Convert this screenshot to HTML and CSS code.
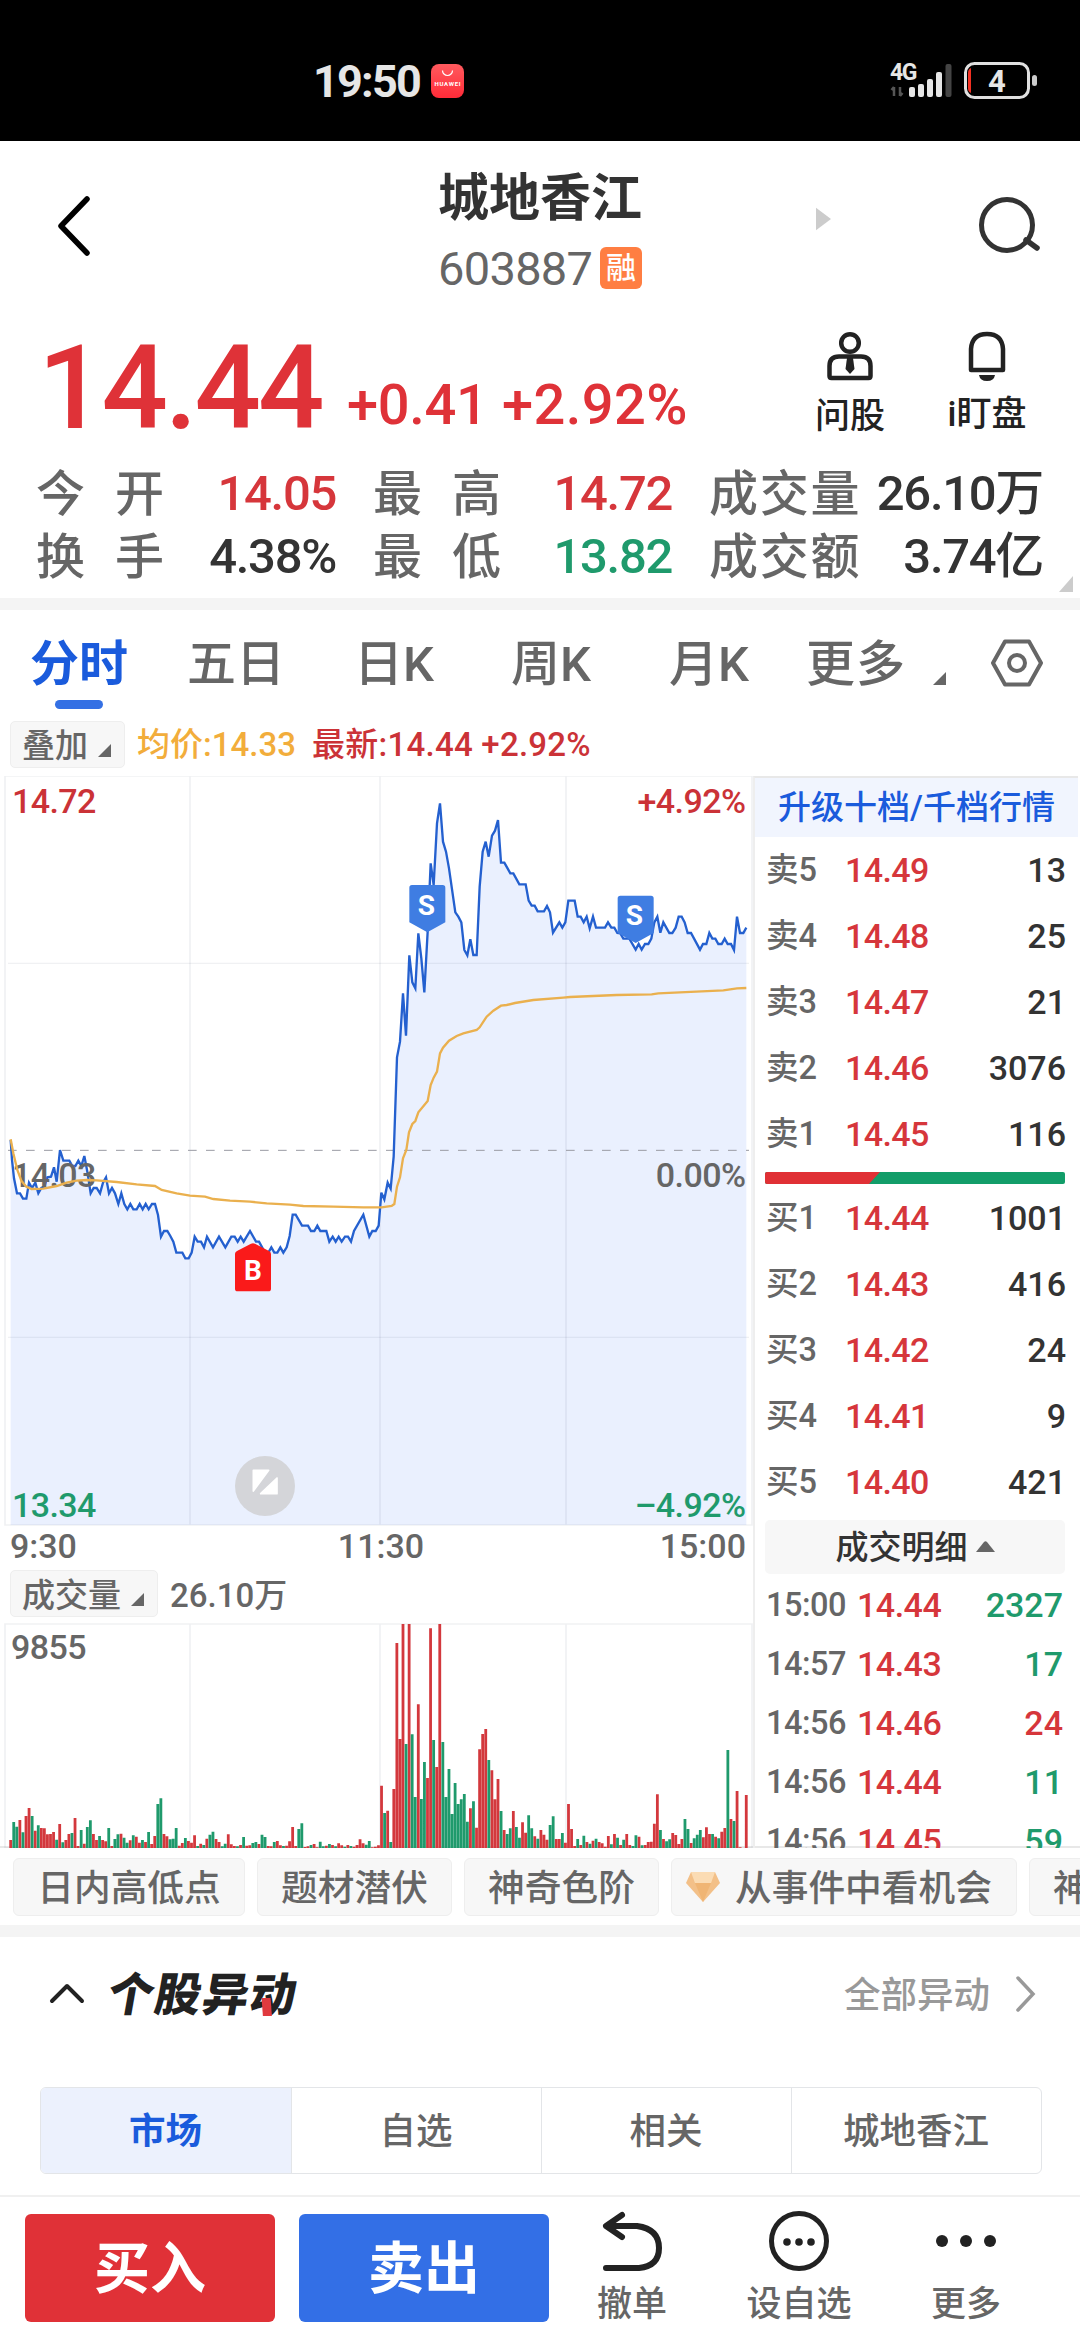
FILE: index.html
```html
<!DOCTYPE html>
<html lang="zh-CN">
<head>
<meta charset="utf-8">
<title>城地香江 603887</title>
<link rel="stylesheet" href="styles.css">
</head>
<body>
<div class="status">
  <div class="clock">19:50</div>
  <svg class="app-icon" viewBox="0 0 33 34"><defs><linearGradient id="hw" x1="0" y1="0" x2="0" y2="1"><stop offset="0" stop-color="#ff5a5e"/><stop offset="1" stop-color="#ff2b38"/></linearGradient></defs><rect width="33" height="34" rx="8" fill="url(#hw)"/><path d="M11.500 6.500a5 5 0 0 0 10 0" fill="none" stroke="#fff" stroke-width="1.200"/><text x="3.500" y="22" font-size="6" font-weight="700" fill="#fff" textLength="26">HUAWEI</text></svg>
  <div class="network">
    <span class="net-type">4G</span>
    <svg class="signal" viewBox="0 0 64 36"><path d="M4 25v9M1.500 28L4 25M10 25v9M12.500 31L10 34" stroke="#555" stroke-width="2.500" fill="none"/><g fill="#e6e6e6"><rect x="19" y="25" width="6" height="10" rx="2"/><rect x="28" y="22" width="6" height="13" rx="2"/><rect x="37" y="17" width="6" height="18" rx="2"/><rect x="46" y="10" width="6" height="25" rx="2"/></g><rect x="55.500" y="2" width="6" height="33" rx="2" fill="#444"/></svg>
  </div>
  <svg class="battery" viewBox="0 0 74 37"><rect x="1.500" y="1.500" width="63" height="34" rx="9" fill="none" stroke="#e0e0e0" stroke-width="3"/><path d="M7 6v25q-3-1-3-5V11q0-4 3-5z" fill="#f33122"/><rect x="68" y="13" width="5" height="11" rx="2.500" fill="#ccc"/><text x="33" y="30" text-anchor="middle" font-size="31" font-weight="700" fill="#e6e6e6">4</text></svg>
</div>

<header class="header">
  <svg class="back" viewBox="0 0 36 64"><path d="M32 5L6 32l26 27" fill="none" stroke="#000" stroke-width="5.500" stroke-linecap="round" stroke-linejoin="round"/></svg>
  <div class="title">
    <h1>城地香江</h1>
    <div class="code"><span>603887</span><b>融</b></div>
  </div>
  <svg class="next" viewBox="0 0 16 24"><path d="M0 0L16 12 0 24z" fill="#ccc"/></svg>
  <svg class="search" viewBox="0 0 64 60"><circle cx="29" cy="29" r="25.500" fill="none" stroke="#333" stroke-width="5"/><path d="M48 44l11 8" stroke="#333" stroke-width="5.500" stroke-linecap="round"/></svg>
</header>

<section class="quote">
  <div class="price-row">
    <div class="price">14.44</div>
    <div class="change">+0.41</div>
    <div class="change pct">+2.92%</div>
    <div class="quick ask"><svg viewBox="0 0 48 50"><g fill="none" stroke="#222" stroke-width="4.500"><circle cx="24" cy="12" r="8.800"/><path d="M3.500 45V35q0-9.500 9.500-9.500h22q9.500 0 9.500 9.500v10q0 2-2 2h-37q-2 0-2-2z"/></g><path d="M21 27h6l1.500 11-4.500 5-4.500-5z" fill="#222"/></svg><span>问股</span></div>
    <div class="quick watch"><svg viewBox="0 0 48 50"><path d="M8 39V18Q9 3 24 3t16 15v21z" fill="none" stroke="#222" stroke-width="4.500" stroke-linejoin="round"/><path d="M16 44h16q-1 6-8 6t-8-6z" fill="#222"/></svg><span>i盯盘</span></div>
  </div>
  <div class="stats">
    <span class="wide">今<i></i>开</span><span class="num up">14.05</span><span class="wide">最<i></i>高</span><span class="num up">14.72</span><span>成交量</span><span class="num">26.10万</span>
    <span class="wide">换<i></i>手</span><span class="num">4.38%</span><span class="wide">最<i></i>低</span><span class="num down">13.82</span><span>成交额</span><span class="num">3.74亿</span>
  </div>
  <svg class="expand" viewBox="0 0 14 16"><path d="M14 0v16H0z" fill="#ccc"/></svg>
</section>
<div class="band"></div>

<nav class="tabs">
  <span class="active">分时</span><span>五日</span><span>日K</span><span>周K</span><span>月K</span><span>更多</span>
  <svg class="tab-corner" viewBox="0 0 13 13"><path d="M13 0v13H0z" fill="#666"/></svg>
  <svg class="settings" viewBox="0 0 52 48"><path d="M14 2.500h24L50 24 38 45.500H14L2 24z" fill="none" stroke="#666" stroke-width="4" stroke-linejoin="round"/><circle cx="26" cy="24" r="8" fill="none" stroke="#666" stroke-width="4"/></svg>
</nav>
<div class="legend">
  <div class="pill">叠加<svg viewBox="0 0 13 13"><path d="M13 0v13H0z" fill="#666"/></svg></div>
  <span class="avg">均价:14.33</span><span class="last">最新:14.44 +2.92%</span>
</div>

<main class="board">
  <div class="charts">
    <svg class="minute" viewBox="0 18 2259 2253">
      <path id="price-area" fill="#eaf0fe"/>
      <g class="grid"><path d="M15 18H2256V2265H15zM570 18V2265M1140 18V2265M1698 18V2265" stroke-width="5"/><path d="M24 580H2247M24 1702H2247" stroke-width="3.500"/></g>
      <path d="M24 1141H2247" stroke="#999ba3" stroke-width="3" stroke-dasharray="26 28"/>
      <path id="price-line" fill="none" stroke="#2460cf" stroke-width="7"/>
      <g class="scale"><text x="36" y="1250" class="t-mid">14.03</text></g>
      <path d="M32 1108L40 1150 52 1200 64 1232 79 1250 95 1257 130 1256 170 1248 200 1238 230 1232 260 1230 290 1231 350 1236 410 1243 465 1248 485 1260 530 1270 570 1277 615 1280 640 1287 690 1292 750 1295 800 1300 870 1304 910 1308 1000 1310 1090 1312 1145 1312 1175 1308 1183 1302 1191 1250 1200 1222 1209 1165 1219 1140 1227 1087 1237 1062 1246 1053 1255 1027 1283 993 1292 945 1301 923 1311 905 1320 850 1329 833 1347 812 1370 798 1390 790 1430 780 1439 772 1460 740 1480 722 1503 707 1520 705 1545 699 1600 690 1690 683 1710 681 1850 675 1955 673 1975 670 2170 661 2211 655 2239 654" fill="none" stroke="#eab04e" stroke-width="7"/>
      <g class="scale">
        <text x="36" y="129" class="t-up">14.72</text><text x="2236" y="129" text-anchor="end" class="t-up">+4.92%</text>
        <text x="2236" y="1250" text-anchor="end" class="t-mid">0.00%</text>
        <text x="36" y="2240" class="t-down">13.34</text><text x="2236" y="2240" text-anchor="end" class="t-down">–4.92%</text>
      </g>
      <path d="M705 1452q0-6 6-9l42-22q6-3 12 0l42 22q6 3 6 9v104q0 8-8 8h-92q-8 0-8-8z" fill="#fa1a1a"/>
      <path d="M1228 353q0-8 8-8h92q8 0 8 8v104l-54 30-54-30zM1853 385q0-8 8-8h92q8 0 8 8v104l-54 30-54-30z" fill="#3f7de2"/>
      <g class="marks"><text x="759" y="1529">B</text><text x="1279" y="434">S</text><text x="1903" y="466">S</text></g>
      <circle cx="795" cy="2148" r="90" fill="#d4d5d9"/>
      <path d="M760 2101h46l-46 62zM831 2124v47h-49z" fill="#fff" stroke="#fff" stroke-width="5" stroke-linejoin="round"/>
    </svg>
    <div class="axis"><span>9:30</span><span>11:30</span><span>15:00</span></div>
    <div class="vol-head"><div class="pill">成交量<svg viewBox="0 0 13 13"><path d="M13 0v13H0z" fill="#666"/></svg></div><span>26.10万</span></div>
    <svg class="volume" viewBox="0 69 2259 675">
      <path class="grid" d="M15 72H2256V744H15zM570 72V744M1140 72V744M1698 72V744" stroke-width="5"/>
      <path id="vol-up" stroke="#d3383d"/><path id="vol-down" stroke="#1f9a6c"/>
      <g class="scale"><text x="33" y="177" class="t-mid">9855</text></g>
    </svg>
  </div>
  <aside class="book">
    <div class="upgrade">升级十档/千档行情</div>
    <div class="levels">
      <div><span>卖5</span><em>14.49</em><b>13</b></div>
      <div><span>卖4</span><em>14.48</em><b>25</b></div>
      <div><span>卖3</span><em>14.47</em><b>21</b></div>
      <div><span>卖2</span><em>14.46</em><b>3076</b></div>
      <div><span>卖1</span><em>14.45</em><b>116</b></div>
    </div>
    <svg class="ratio" viewBox="0 0 300 12"><rect width="300" height="12" rx="2" fill="#129d69"/><path d="M2 0H115L104 12H2Q0 12 0 10V2Q0 0 2 0z" fill="#e03035"/></svg>
    <div class="levels">
      <div><span>买1</span><em>14.44</em><b>1001</b></div>
      <div><span>买2</span><em>14.43</em><b>416</b></div>
      <div><span>买3</span><em>14.42</em><b>24</b></div>
      <div><span>买4</span><em>14.41</em><b>9</b></div>
      <div><span>买5</span><em>14.40</em><b>421</b></div>
    </div>
    <div class="detail-head">成交明细<svg viewBox="0 0 19 11"><path d="M0 11L8 1q1.500-1.500 3 0L19 11z" fill="#666"/></svg></div>
    <div class="ticks">
      <div><span>15:00</span><em>14.44</em><b class="down">2327</b></div>
      <div><span>14:57</span><em>14.43</em><b class="down">17</b></div>
      <div><span>14:56</span><em>14.46</em><b class="up">24</b></div>
      <div><span>14:56</span><em>14.44</em><b class="down">11</b></div>
      <div><span>14:56</span><em>14.45</em><b class="down">59</b></div>
    </div>
  </aside>
</main>

<div class="chips">
  <span>日内高低点</span><span>题材潜伏</span><span>神奇色阶</span>
  <span class="gem"><svg viewBox="0 0 34 30"><path d="M5 0h24l5 11-17 19L0 11z" fill="#f3c088"/><path d="M5 0h24l-4 11H9z" fill="#fbdcb4"/><path d="M9 11h16l-8 19z" fill="#f0b574"/></svg>从事件中看机会</span>
  <span>神奇电波</span>
</div>
<div class="band"></div>

<section class="moves">
  <svg class="fold" viewBox="0 0 36 22"><path d="M3 19L18 4l15 15" fill="none" stroke="#222" stroke-width="4" stroke-linecap="round" stroke-linejoin="round"/></svg>
  <h2>个股异动<i></i></h2>
  <span class="all">全部异动</span>
  <svg class="more" viewBox="0 0 20 36"><path d="M2 2l15 16L2 34" fill="none" stroke="#999" stroke-width="3.500" stroke-linecap="round"/></svg>
</section>
<div class="segments"><span class="active">市场</span><span>自选</span><span>相关</span><span>城地香江</span></div>

<footer class="actions">
  <button class="buy">买入</button><button class="sell">卖出</button>
  <div class="act undo"><svg viewBox="0 0 60 60"><path d="M20 4L4 15l16 11M5 15h30q22 3 22 22 0 18-20 20H4" fill="none" stroke="#222" stroke-width="6" stroke-linecap="round" stroke-linejoin="round"/></svg><span>撤单</span></div>
  <div class="act fav"><svg viewBox="0 0 60 60"><circle cx="30" cy="30" r="27.500" fill="none" stroke="#222" stroke-width="5"/><g fill="#222"><circle cx="18" cy="31" r="3.800"/><circle cx="30" cy="31" r="3.800"/><circle cx="42" cy="31" r="3.800"/></g></svg><span>设自选</span></div>
  <div class="act etc"><svg viewBox="0 0 60 60"><g fill="#222"><circle cx="6" cy="30" r="6"/><circle cx="30" cy="30" r="6"/><circle cx="54" cy="30" r="6"/></g></svg><span>更多</span></div>
</footer>
<script src="charts.js"></script>
</body>
</html>
```
FILE: styles.css
```css
* { box-sizing: border-box; }
body {
  margin: 0;
  width: 1080px;
  height: 2340px;
  overflow: hidden;
  background: #fff;
  color: #333;
  font-family: Roboto, "Noto Sans CJK SC", sans-serif;
  font-weight: 500;
  display: flex;
  flex-direction: column;
}
svg { display: block; flex: none; }
span, em, b, i { font-style: normal; white-space: nowrap; }
.up { color: #d6363b; }
.down { color: #1f9a6c; }

.status { height: 141px; flex: none; background: #000; color: #e6e6e6; display: flex; padding-left: 313px; }
.clock { width: 118px; margin-top: 55px; height: 54px; line-height: 54px; font-size: 45px; font-weight: 700; letter-spacing: -1.800px; }
.app-icon { width: 33px; height: 34px; margin-top: 64px; }
.network { display: grid; margin: 62px 0 0 426px; width: 66px; height: 36px; }
.net-type { grid-area: 1 / 1; font-size: 23px; line-height: 22px; font-weight: 700; letter-spacing: -1.500px; }
.signal { grid-area: 1 / 1; width: 64px; height: 36px; }
.battery { width: 74px; height: 37px; margin: 62px 0 0 7.500px; }

.header { height: 179px; flex: none; display: flex; }
.back { width: 36px; height: 64px; margin: 53px 0 0 55px; }
.title { width: 210px; margin: 28px 0 0 347px; }
h1 { margin: 0; font-size: 51px; line-height: 60px; font-weight: 700; white-space: nowrap; }
.code { display: flex; align-items: center; height: 46px; margin-top: 16px; color: #666; }
.code span { width: 162px; font-size: 47px; letter-spacing: -0.7px; font-weight: 400; }
.code b { width: 42px; height: 42px; border-radius: 6px; background: #ff7e42; color: #fff; font-size: 30px; line-height: 42px; font-weight: 500; text-align: center; }
.next { width: 15px; height: 24px; margin: 66px 0 0 168px; }
.search { width: 64px; height: 60px; margin: 55px 0 0 147px; }

.quote { height: 278px; flex: none; position: relative; }
.price-row { height: 142px; display: flex; color: #df3238; }
.price { width: 307px; padding-left: 38px; font-size: 117px; line-height: 136px; letter-spacing: -3px; }
.change { width: 155px; margin-left: 40px; margin-top: 55px; font-size: 56px; line-height: 60px; letter-spacing: -0.3px; }
.pct { width: 313px; margin-left: 0; letter-spacing: .4px; }
.quick { width: 70px; display: flex; flex-direction: column; align-items: center; color: #222; font-size: 35px; line-height: 44px; }
.quick svg { width: 48px; height: 50px; margin-top: 11px; }
.quick span { margin-top: 14px; }
.watch { margin-left: 67px; }
.watch span { margin-top: 12px; }
.stats { display: grid; grid-template-columns: 128px 172px 165px 171px 187px 184px; margin: 1px 0 0 36px; grid-auto-rows: 63px; line-height: 63px; font-size: 49px; color: #666; }
.stats .wide { display: flex; }
.stats .wide i { width: 30px; }
.stats > :nth-child(6n + 3), .stats > :nth-child(6n + 5) { padding-left: 37px; }
.stats > :nth-child(6n + 5) { letter-spacing: 1.800px; }
.stats .num { text-align: right; letter-spacing: -1.300px; line-height: 61px; }
.stats .num:not(.up, .down) { color: #333; }
.stats .up { color: #d6363b; }
.stats .down { color: #1f9a6c; }
.expand { position: absolute; right: 7px; bottom: 6px; width: 14px; height: 16px; }
.band { height: 12px; flex: none; background: #f4f4f4; }

.tabs { height: 106px; flex: none; display: flex; font-size: 49px; line-height: 109px; color: #666; padding-left: 30px; }
.tabs span { display: block; }
.tabs span:nth-child(1) { width: 157px; }
.tabs span:nth-child(2) { width: 167px; }
.tabs span:nth-child(3) { width: 157px; }
.tabs span:nth-child(4) { width: 158px; }
.tabs span:nth-child(5) { width: 137px; }
.tabs span:nth-child(6) { width: 127px; letter-spacing: 1px; }
.tabs .active { color: #1a5bdc; font-weight: 700; display: flex; flex-direction: column; height: 100px; }
.tabs .active::after { content: ""; width: 48px; height: 9px; border-radius: 5px; background: #3470e4; margin: -19px 0 0 25px; flex: none; }
.tab-corner { width: 13px; height: 13px; margin-top: 62px; }
.settings { width: 52px; height: 48px; margin: 29px 0 0 45px; }
.legend { height: 60px; flex: none; display: flex; padding: 5px 0 0 10px; font-size: 33px; line-height: 48px; }
.pill { height: 47px; display: flex; background: #f7f7f7; border-radius: 5px; border: 1px solid #eee; color: #666; padding-left: 11px; line-height: 48px; }
.pill svg { width: 13px; height: 13px; margin: 22px 0 0 10px; }
.legend .pill { width: 115px; }
.avg { color: #f2ad3b; width: 175px; margin-left: 12px; }
.last { color: #cb3237; letter-spacing: .25px; }

.board { height: 1072px; flex: none; display: flex; border-bottom: 2px solid #e8e8e8; }
.charts { width: 753px; flex: none; color: #666; }
.grid { fill: none; stroke: #20304c; stroke-opacity: .065; }
.minute { width: 753px; height: 751px; }
.scale { font-size: 102px; letter-spacing: -1.800px; }
.t-up { fill: #cb3237; }
.t-mid { fill: #666; }
.t-down { fill: #1f9a6c; }
.marks { font-size: 84px; font-weight: 700; fill: #fff; text-anchor: middle; }
.axis { height: 43px; display: grid; grid-template-columns: 1fr 1fr 1fr; padding: 0 7px 0 10px; font-size: 34px; line-height: 39px; }
.axis span:nth-child(2) { text-align: center; padding-left: 6px; }
.axis span:nth-child(3) { text-align: right; }
.vol-head { height: 54px; display: flex; font-size: 33px; line-height: 51px; padding-left: 10px; }
.vol-head .pill { width: 148px; margin-right: 12px; line-height: 50px; }
.volume { width: 753px; height: 225px; margin-top: -1px; }
.volume #vol-up, .volume #vol-down { stroke-width: 8.400; }

.book { width: 325px; height: 1072px; overflow: hidden; border-left: 2px solid #eee; border-top: 2px solid #e8e8e8; display: flex; flex-direction: column; }
.upgrade { height: 59px; flex: none; background: #f1f5fe; color: #1a5bdc; font-size: 33px; line-height: 60px; text-align: center; white-space: nowrap; }
.levels div { height: 66px; line-height: 66px; display: flex; padding: 0 12px 0 11px; font-size: 34px; }
.levels span { width: 79px; color: #666; font-size: 32.500px; }
.levels em { color: #d6363b; width: 100px; letter-spacing: -.6px; }
.levels b { margin-left: auto; font-weight: 500; }
.ratio { width: 300px; height: 12px; margin: 5px 0 1px 10px; }
.detail-head { width: 300px; height: 54px; flex: none; margin: 5px 0 1px 10px; border-radius: 5px; background: #f7f7f7; font-size: 33px; line-height: 56px; display: flex; justify-content: center; }
.detail-head svg { width: 19px; height: 11px; margin: 21px 0 0 8px; }
.ticks div { height: 59px; line-height: 61px; display: flex; padding: 0 15px 0 11px; font-size: 34px; }
.ticks span { width: 91px; color: #666; font-size: 32.500px; letter-spacing: -.5px; }
.ticks em { color: #d6363b; letter-spacing: -.5px; }
.ticks b { margin-left: auto; font-weight: 500; }

.chips { height: 77px; flex: none; display: flex; gap: 12px; padding: 10px 0 0 13px; overflow: hidden; }
.chips span { width: 195px; height: 58px; flex: none; border: 1px solid #eee; border-radius: 6px; background: #f7f7f7; color: #666; font-size: 36.700px; line-height: 59px; display: flex; justify-content: center; }
.chips span:first-child { width: 232px; }
.chips .gem { width: 346px; justify-content: flex-start; padding-left: 14px; }
.chips .gem svg { width: 34px; height: 30px; margin: 13px 15px 0 0; }

.moves { height: 150px; flex: none; display: flex; padding-left: 49px; line-height: 116px; }
.fold { width: 36px; height: 22px; margin-top: 45px; }
h2 { position: relative; margin: 0 0 0 23px; width: 736px; font-size: 46px; font-weight: 900; color: #222; white-space: nowrap; transform: skewX(-10deg); transform-origin: 0 60px; letter-spacing: 1.300px; }
h2 i { position: absolute; left: 156px; top: 61px; width: 9px; height: 18px; background: #e03a3f; transform: skewX(14deg); }
.all { color: #999; font-size: 36.500px; line-height: 118px; }
.more { width: 20px; height: 36px; margin: 39px 0 0 26px; }
.segments { height: 87px; width: 1002px; flex: none; margin-left: 39.500px; border: 1px solid #e3e5e8; border-radius: 6px; display: grid; grid-template-columns: repeat(4, 1fr); font-size: 36.500px; line-height: 88px; text-align: center; color: #666; overflow: hidden; }
.segments span + span { border-left: 1px solid #e3e5e8; }
.segments .active { background: #ecf1fd; color: #1a5bdc; font-weight: 700; }

.actions { margin-top: 21px; height: 145px; flex: none; border-top: 2px solid #f0f0f0; display: flex; padding: 17px 0 0 25px; }
button { width: 250px; height: 108px; flex: none; border: 0; border-radius: 6px; color: #fff; font: 700 56px/108px Roboto, "Noto Sans CJK SC", sans-serif; padding: 1px 0 0; overflow: hidden; }
.buy { background: #e03137; margin-right: 24px; }
.sell { background: #336fe6; }
.act { width: 110px; display: flex; flex-direction: column; align-items: center; font-size: 35px; line-height: 44px; color: #666; }
.act svg { width: 60px; height: 60px; margin: -3px 0 12px; }
.undo { margin-left: 28px; }
.fav { margin-left: 57px; }
.etc { margin-left: 57px; }
```
FILE: charts.js
```js
// Price polyline, as "x y" pairs in the chart's viewBox.
const price = `32 1110 36 1170 42 1225 51 1270 60 1270 69 1286 79 1286 87 1238 96 1254 106 1238
115 1270 124 1254 133 1250 142 1222 153 1220 162 1192 170 1235 180 1140 190 1172 208 1172
217 1188 226 1188 235 1172 244 1188 253 1158 262 1205 272 1270 281 1254 290 1254 300 1270
309 1238 318 1222 327 1270 336 1254 345 1270 355 1302 364 1270 373 1302 382 1318 391 1302
400 1318 410 1318 419 1302 428 1318 437 1302 446 1318 456 1302 465 1302 474 1335 483 1400
492 1383 502 1383 511 1398 520 1415 529 1448 547 1448 556 1465 566 1465 575 1448 584 1400
593 1415 603 1415 612 1432 621 1400 639 1432 657 1400 676 1432 694 1400 704 1400 713 1415
722 1400 731 1415 750 1383 768 1415 777 1415 795 1448 805 1448 814 1432 823 1448 832 1448
841 1432 850 1448 860 1432 869 1398 878 1334 887 1334 906 1367 924 1367 933 1383 943 1383
952 1367 961 1383 979 1383 988 1415 998 1400 1007 1415 1016 1400 1025 1415 1035 1400 1044 1400
1053 1415 1062 1383 1090 1334 1108 1400 1117 1383 1127 1383 1136 1367 1144 1268 1153 1288
1163 1238 1172 1256 1181 1160 1191 862 1200 815 1209 670 1218 797 1228 556 1237 637 1246 655
1255 490 1264 565 1273 667 1283 485 1292 280 1301 345 1311 160 1320 100 1329 215 1338 245
1347 295 1366 427 1375 440 1384 457 1393 540 1402 556 1411 508 1420 555 1430 555 1439 350
1448 245 1457 215 1466 260 1476 197 1485 182 1494 150 1503 278 1513 278 1531 310 1540 310
1558 343 1577 343 1586 392 1595 407 1604 407 1613 424 1632 424 1641 408 1650 427 1659 488
1678 457 1687 473 1696 457 1705 392 1724 392 1733 440 1742 440 1751 457 1760 440 1769 475
1779 440 1788 473 1815 473 1824 457 1834 473 1843 473 1852 489 1861 490 1870 506 1888 506
1907 539 1916 522 1925 539 1935 522 1945 522 1954 506 1963 457 1972 440 1981 488 1990 457
2008 489 2017 489 2027 473 2036 440 2045 440 2054 457 2063 489 2073 489 2100 539 2109 522
2119 522 2128 489 2137 506 2146 506 2155 522 2165 522 2174 506 2183 522 2193 522 2202 540
2211 440 2220 489 2230 489 2239 473`;
document.getElementById("price-line").setAttribute("d", `M${price}`);
document.getElementById("price-area").setAttribute("d", `M${price}V2265H32z`);

// One entry per trading minute: direction (r = up, g = down) and bar height.
const volume = `r24 g78 g64 r84 g47 r96 r120 g96 r52 g68 r60 r59 r41 r42 r48 g25 r72 g17 r24 r42
g45 r90 r6 g54 r13 g63 g83 r42 r24 g36 r24 r20 g60 r6 g27 g41 r43 g31 g16 r23
g38 r34 r16 g24 r18 g48 r12 r36 g132 g149 r42 r35 g26 g28 g60 r7 r15 g30 r21 r16
r38 g6 r13 g9 r28 g40 g49 r27 r18 g5 g13 r41 r11 r6 g5 r9 g33 r7 r8 g15
g18 r12 g40 g33 r6 r5 g18 r21 r8 g6 r7 r20 r63 r6 g57 g74 r3 r5 g9 r12
r2 g19 g5 r7 g12 r9 g5 r14 r8 g4 r9 g6 r4 r9 r26 r14 g10 g21 r2 r4
r8 r187 g105 r112 g18 r177 r615 r327 r672 g312 r672 g341 g153 r431 g147 g258 r210 r659 g324 r243
r672 g318 g153 g237 g102 g195 g132 g146 g162 g79 r119 g140 r61 r296 r342 r357 g264 r233 r146 r207
g111 r54 g42 g59 r111 g63 g31 r77 r46 g98 g59 r35 g28 r54 r40 r25 g69 g95 r27 r27
g45 r16 r132 r57 r6 g27 r9 g37 r18 g13 r22 g28 r18 r14 r4 r36 g11 r42 g31 r9
g25 r42 r9 g6 g38 r34 g8 r9 r18 r19 r73 r161 g54 r27 g20 g26 r45 r39 r12 r27
g87 g57 r15 g29 g40 g54 r32 r62 r42 g42 r34 g29 r49 r60 g294 r87 g81 r171 r2 r0 r159`.split(/\s+/);

const paths = { r: "", g: "" };
volume.forEach((bar, minute) => {
  paths[bar[0]] += `M${(32 + minute * 9.195).toFixed(1)} 744v-${bar.slice(1)}`;
});
document.getElementById("vol-up").setAttribute("d", paths.r);
document.getElementById("vol-down").setAttribute("d", paths.g);
```
